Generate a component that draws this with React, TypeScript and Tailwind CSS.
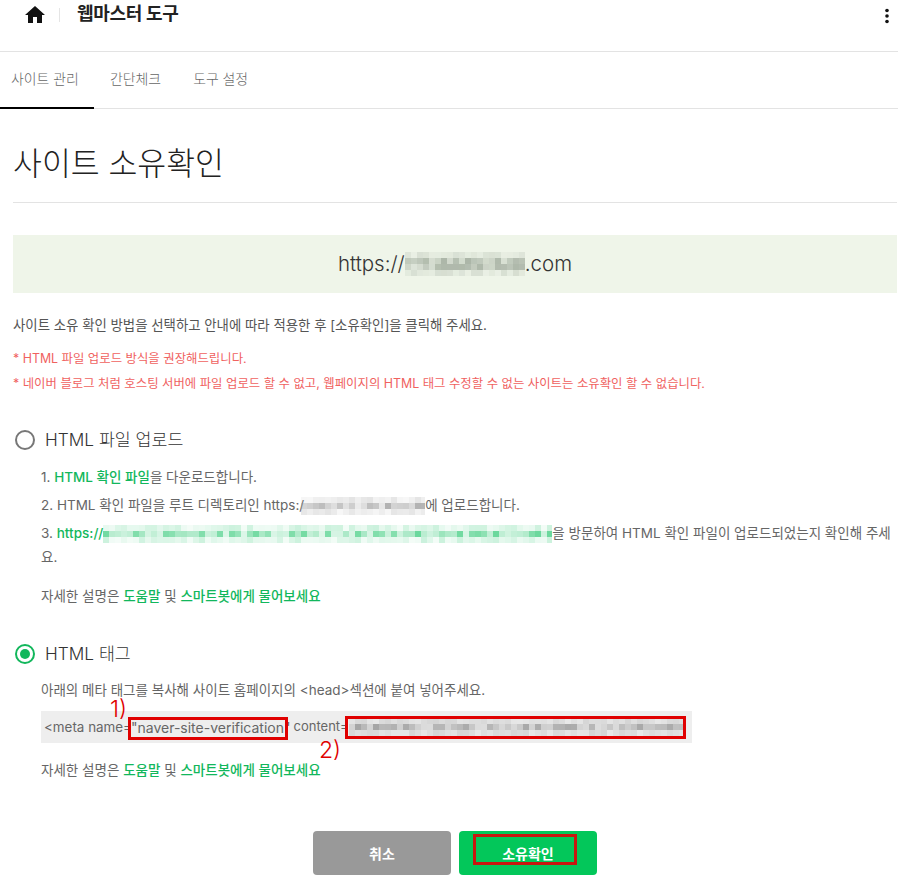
const FONT = "font-['Inter','Noto_Sans_CJK_KR',sans-serif]";

function Mosaic({ width, height, cell = 7, tint, seed = 1, strength = 0.5 }: { width: number; height: number; cell?: number; tint: string; seed?: number; strength?: number }) {
  const cols = Math.ceil(width / cell);
  const rows = Math.ceil(height / cell);
  let s = seed * 7919 + 13;
  const next = () => {
    s = (s * 1103515245 + 12345) & 0x7fffffff;
    return s / 0x7fffffff;
  };
  const rects = [];
  for (let y = 0; y < rows; y++) {
    for (let x = 0; x < cols; x++) {
      const v = next();
      const o = (y === 0 || y === rows - 1 ? 0.35 : 1) * strength * (0.25 + v * 0.95);
      rects.push(<rect key={`${x}-${y}`} x={x * cell} y={y * cell} width={cell} height={cell} fill={tint} opacity={o} />);
    }
  }
  return (
    <svg width={width} height={height} className="inline-block align-middle" shapeRendering="crispEdges">
      {rects}
    </svg>
  );
}

function Help() {
  return (
    <p className="text-[13.5px] leading-5 text-[#666]">
      자세한 설명은 <span className="font-medium text-[#12b75c]">도움말</span> 및 <span className="font-medium text-[#12b75c]">스마트봇에게 물어보세요</span>
    </p>
  );
}

export default function App() {
  return (
    <div className={`${FONT} h-[881px] w-[898px] overflow-hidden bg-white`}>
      <header className="flex h-[52px] items-start border-b border-[#e3e3e3] pt-[4px]">
        <svg viewBox="0 0 24 24" className="ml-[23px] mt-[-1px] h-[24px] w-[24px]" fill="#111">
          <path d="M10 20v-6h4v6h5v-8h3L12 3 2 12h3v8z" />
        </svg>
        <span className="ml-[12px] mt-[4px] h-[14px] w-px bg-[#e5e5e5]" />
        <h1 className="ml-[17px] text-[18px] font-bold leading-[20px] tracking-[-0.3px] text-[#222]">웹마스터 도구</h1>
        <svg viewBox="0 0 4 16" className="ml-auto mr-[9px] mt-[4px] h-[16px] w-[4px]" fill="#111">
          <circle cx="2" cy="2.5" r="1.8" />
          <circle cx="2" cy="8" r="1.8" />
          <circle cx="2" cy="13.5" r="1.8" />
        </svg>
      </header>

      <nav className="flex h-[57px] border-b border-[#e3e3e3] text-[13.9px] font-light text-[#666]">
        <a className="mb-[-1px] flex w-[94px] items-center border-b-2 border-black pl-[11px] pb-[1px]">사이트 관리</a>
        <a className="ml-[16px] flex items-center pb-[1px]">간단체크</a>
        <a className="ml-[32px] flex items-center pb-[1px]">도구 설정</a>
      </nav>

      <main className="ml-[13px] mr-px">
        <h2 className="flex h-[94px] items-center border-b border-[#e3e3e3] pt-[19px] text-[31.4px] font-light text-[#222]">사이트 소유확인</h2>

        <div className="mt-[32px] flex h-[58px] items-center justify-center bg-[#eff5e9] text-[20.5px] font-light text-[#333]">
          <span>https://</span>
          <Mosaic width={120} height={24} cell={6} tint="#8e9a8b" seed={3} strength={0.6} />
          <span>.com</span>
        </div>

        <p className="mt-[22px] text-[13.4px] leading-5 text-[#555]">사이트 소유 확인 방법을 선택하고 안내에 따라 적용한 후 [소유확인]을 클릭해 주세요.</p>
        <p className="mt-[14px] text-[12.4px] leading-5 text-[#f0625f]">* HTML 파일 업로드 방식을 권장해드립니다.</p>
        <p className="mt-[5px] text-[12.4px] leading-5 text-[#f0625f]">* 네이버 블로그 처럼 호스팅 서버에 파일 업로드 할 수 없고, 웹페이지의 HTML 태그 수정할 수 없는 사이트는 소유확인 할 수 없습니다.</p>

        <div className="mt-[34px] flex h-[24px] items-center">
          <span className="ml-[2px] h-[20px] w-[20px] rounded-full border-2 border-[#777]" />
          <span className="ml-[10px] text-[17.3px] font-light text-[#333]">HTML 파일 업로드</span>
        </div>
        <div className="ml-[28px] mt-[11px] text-[13.5px] leading-[28px] text-[#666]">
          <p>1. <span className="font-medium text-[#12b75c]">HTML 확인 파일</span>을 다운로드합니다.</p>
          <p>2. HTML 확인 파일을 루트 디렉토리인 https:/<span className="ml-[-3px]"><Mosaic width={124} height={18} cell={6} tint="#9a9a9a" seed={5} strength={0.65} /></span>에 업로드합니다.</p>
          <p>
            3. <span className="font-medium text-[#12b75c]">https://</span><Mosaic width={449} height={18} cell={6} tint="#1fc46a" seed={9} strength={0.55} />을 방문하여 HTML 확인 파일이 업로드되었는지 확인해 주세
          </p>
          <p className="leading-[20px]">요.</p>
          <div className="mt-[19px]"><Help /></div>
        </div>

        <div className="mt-[36px] flex h-[24px] items-center">
          <span className="ml-[2px] flex h-[20px] w-[20px] items-center justify-center rounded-full border-2 border-[#12b75c]">
            <span className="h-[10px] w-[10px] rounded-full bg-[#12b75c]" />
          </span>
          <span className="ml-[10px] text-[17.3px] font-light text-[#333]">HTML 태그</span>
        </div>
        <p className="ml-[28px] mt-[14px] text-[13.5px] leading-5 text-[#666]">아래의 메타 태그를 복사해 사이트 홈페이지의 &lt;head&gt;섹션에 붙여 넣어주세요.</p>

        <div className="relative ml-[28px] mt-[11px] flex h-[32px] w-[651px] items-center whitespace-nowrap bg-[#eeeeee] pl-[3px] text-[14px] text-[#666]">
          <span className="text-[13.4px]">&lt;meta name=</span>
          <span className="ml-[-1px]">"naver-site-verification"</span>
          <span className="ml-[3px] text-[13px]">content=</span>
          <Mosaic width={336} height={18} cell={6} tint="#8a8a8a" seed={12} strength={0.6} />
          <span className="absolute left-[87px] top-[6px] h-[23px] w-[160px] border-[3px] border-[#e00000]" />
          <span className="absolute left-[304px] top-[5px] h-[23px] w-[341px] border-[3px] border-[#e00000]" />
          <span className="absolute left-[69px] top-[-18px] text-[23px] font-light leading-8 text-[#e00000]">1)</span>
          <span className="absolute left-[278px] top-[23px] text-[23px] font-light leading-8 text-[#e00000]">2)</span>
        </div>
        <div className="ml-[28px] mt-[17px]"><Help /></div>

        <div className="ml-[300px] mt-[51px] flex gap-[8px]">
          <button className="h-[44px] w-[138px] rounded-[4px] bg-[#999999] text-[14px] font-bold text-white">취소</button>
          <button className="relative h-[44px] w-[138px] rounded-[4px] bg-[#03c75a] text-[14px] font-bold text-white">
            소유확인
            <span className="absolute left-[14px] top-[3px] h-[31px] w-[104px] border-[3px] border-[#c8160f]" />
          </button>
        </div>
      </main>
    </div>
  );
}
